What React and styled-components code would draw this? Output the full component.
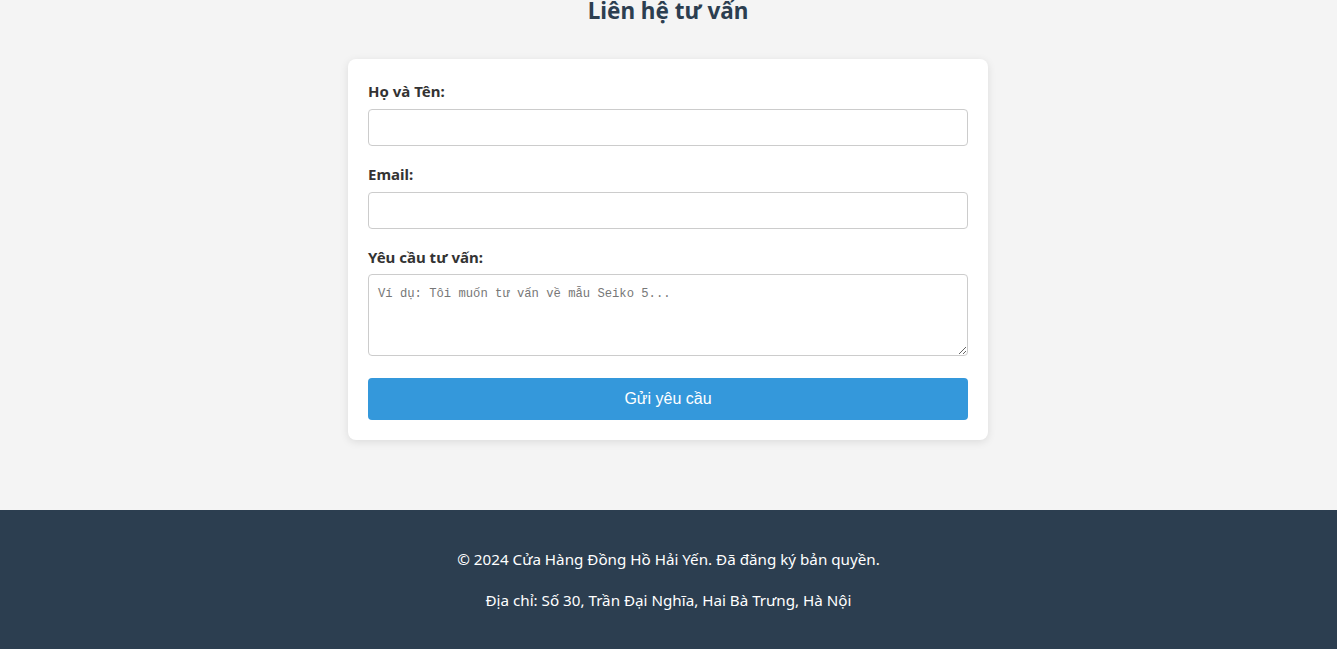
import React from "react";
import styled, { createGlobalStyle } from "styled-components";

const GlobalStyle = createGlobalStyle`
  * {
    box-sizing: border-box;
  }
  body {
    margin: 0;
    background-color: #f4f4f4;
    font-family: "Noto Sans", "Open Sans", sans-serif;
    color: #333;
  }
`;

const StPage = styled.div`
  min-height: 649px;
  display: flex;
  flex-direction: column;
`;

const StMain = styled.main`
  display: flex;
  flex-direction: column;
  align-items: center;
  padding-bottom: 70px;
  padding-right: 1px;
`;

const StTitle = styled.h2`
  margin: 0 0 37px;
  font-size: 22.5px;
  line-height: 22px;
  font-weight: 700;
  color: #2c3e50;
`;

const StCard = styled.div`
  width: 640px;
  padding: 20px;
  background-color: #fff;
  border-radius: 8px;
  box-shadow: 0 2px 8px rgba(0, 0, 0, 0.1);
`;

const StFormGroup = styled.div`
  margin-bottom: ${(props) => (props.$last ? "22px" : "16px")};
`;

const StLabel = styled.label`
  display: block;
  margin-bottom: 6px;
  font-size: 15px;
  line-height: 24px;
  font-weight: 700;
  color: #333;
`;

const StInput = styled.input`
  display: block;
  width: 100%;
  height: 37px;
  padding: 8px 10px;
  border: 1px solid #ccc;
  border-radius: 4px;
  font-size: 14px;
  outline: none;
`;

const StTextarea = styled.textarea`
  display: block;
  width: 100%;
  height: 82px;
  margin-top: -1px;
  padding: 11px 9px 10px;
  border: 1px solid #ccc;
  border-radius: 4px;
  font-family: "Liberation Mono", "DejaVu Sans Mono", monospace;
  font-size: 12.2px;
  line-height: 16px;
  outline: none;

  &::placeholder {
    color: #777;
  }
`;

const StSubmitBtn = styled.button`
  display: block;
  width: 100%;
  height: 42px;
  border: none;
  border-radius: 4px;
  background-color: #3498db;
  color: #fff;
  font-family: "Liberation Sans", Arial, sans-serif;
  font-size: 16px;
  cursor: pointer;
`;

const StFooter = styled.footer`
  margin-top: auto;
  padding: 21px 20px 20px;
  background-color: #2c3e50;
  color: #fff;
  text-align: center;
`;

const StFooterText = styled.p`
  margin: 16px 0;
  font-size: 15.2px;
  line-height: 25px;
`;

function App() {
  return (
    <StPage>
      <GlobalStyle />
      <StMain>
        <StTitle>Liên hệ tư vấn</StTitle>
        <StCard>
          <form onSubmit={(e) => e.preventDefault()}>
            <StFormGroup>
              <StLabel htmlFor="name">Họ và Tên:</StLabel>
              <StInput id="name" type="text" />
            </StFormGroup>
            <StFormGroup>
              <StLabel htmlFor="email">Email:</StLabel>
              <StInput id="email" type="email" />
            </StFormGroup>
            <StFormGroup $last>
              <StLabel htmlFor="message">Yêu cầu tư vấn:</StLabel>
              <StTextarea
                id="message"
                placeholder="Ví dụ: Tôi muốn tư vấn về mẫu Seiko 5..."
              />
            </StFormGroup>
            <StSubmitBtn type="submit">Gửi yêu cầu</StSubmitBtn>
          </form>
        </StCard>
      </StMain>
      <StFooter>
        <StFooterText>
          © 2024 Cửa Hàng Đồng Hồ Hải Yến. Đã đăng ký bản quyền.
        </StFooterText>
        <StFooterText>Địa chỉ: Số 30, Trần Đại Nghĩa, Hai Bà Trưng, Hà Nội</StFooterText>
      </StFooter>
    </StPage>
  );
}

export default App;
